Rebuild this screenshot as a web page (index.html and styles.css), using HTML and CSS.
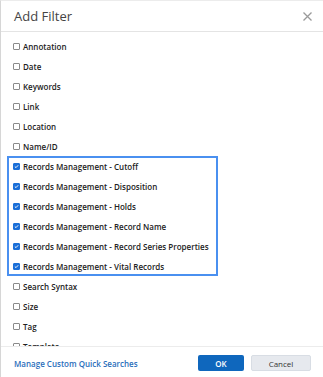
FILE: index.html
```html
<!DOCTYPE html>
<html lang="en">

<head>
  <meta charset="UTF-8">
  <meta name="viewport" content="width=device-width, initial-scale=1.0">
  <title>Add Filter</title>
  <link rel="stylesheet" href="styles.css">
</head>

<body>
  <div class="dialog">
    <header class="dialog_header">
      <h1>Add Filter</h1>
      <button class="dialog_close" aria-label="Close">
        <svg width="9" height="9" viewBox="0 0 9 9">
          <path d="M0.5 0.5 L8.5 8.5 M8.5 0.5 L0.5 8.5" stroke="#9a9a9a" stroke-width="1.3" fill="none" />
        </svg>
      </button>
    </header>

    <div class="dialog_body">
      <label class="filter"><input type="checkbox" /> Annotation</label>
      <label class="filter"><input type="checkbox" /> Date</label>
      <label class="filter"><input type="checkbox" /> Keywords</label>
      <label class="filter"><input type="checkbox" /> Link</label>
      <label class="filter"><input type="checkbox" /> Location</label>
      <label class="filter"><input type="checkbox" /> Name/ID</label>
      <div class="filter-group">
        <label class="filter"><input type="checkbox" checked /> Records Management - Cutoff</label>
        <label class="filter"><input type="checkbox" checked /> Records Management - Disposition</label>
        <label class="filter"><input type="checkbox" checked /> Records Management - Holds</label>
        <label class="filter"><input type="checkbox" checked /> Records Management - Record Name</label>
        <label class="filter"><input type="checkbox" checked /> Records Management - Record Series Properties</label>
        <label class="filter"><input type="checkbox" checked /> Records Management - Vital Records</label>
      </div>
      <label class="filter"><input type="checkbox" /> Search Syntax</label>
      <label class="filter"><input type="checkbox" /> Size</label>
      <label class="filter"><input type="checkbox" /> Tag</label>
      <label class="filter"><input type="checkbox" /> Template</label>
    </div>

    <footer class="dialog_footer">
      <a href="#" class="dialog_link">Manage Custom Quick Searches</a>
      <button class="btn btn-primary">OK</button>
      <button class="btn btn-secondary">Cancel</button>
    </footer>
  </div>
</body>

</html>
```

FILE: styles.css
```css
* {
  box-sizing: border-box;
  padding: 0;
  margin: 0;
}

html {
  font-family: 'Open Sans', sans-serif;
  color: #222222;
}

body {
  background-color: #ffffff;
  height: 377px;
  overflow: hidden;
}

.dialog {
  display: flex;
  flex-direction: column;
  height: 377px;
  border-left: 1px solid #d6d6d6;
  border-top: 1px solid #ececec;
}

.dialog_header {
  display: flex;
  align-items: center;
  justify-content: space-between;
  height: 31px;
  padding: 0 11px 0 13px;
  border-bottom: 1px solid #e4e4e4;
}

.dialog_header h1 {
  font-size: 13px;
  font-weight: 400;
  color: #444444;
}

.dialog_close {
  display: flex;
  border: none;
  background: none;
}

.dialog_body {
  height: 315px;
  overflow: hidden;
  padding: 4px 0 0 12px;
  border-bottom: 1px solid #ececec;
}

.filter {
  display: flex;
  align-items: center;
  gap: 3px;
  height: 20px;
  font-size: 8px;
  font-weight: 600;
  color: #222222;
  white-space: nowrap;
}

.filter input {
  appearance: none;
  flex-shrink: 0;
  width: 7px;
  height: 7px;
  border: 1px solid #8a8a8a;
  border-radius: 1px;
  background-color: #ffffff;
}

.filter input:checked {
  border-color: #1b6fd8;
  background-color: #1b6fd8;
  background-image: url("data:image/svg+xml,%3Csvg xmlns='http://www.w3.org/2000/svg' viewBox='0 0 7 7'%3E%3Cpath d='M1.2 3.6 L2.8 5.1 L5.8 1.8' stroke='white' stroke-width='1.3' fill='none'/%3E%3C/svg%3E");
  background-size: 100% 100%;
}

.filter-group {
  width: 211px;
  margin-left: -6px;
  padding-left: 6px;
  outline: 2px solid #4a90f0;
  outline-offset: -2px;
}

.dialog_footer {
  display: flex;
  align-items: center;
  gap: 7px;
  padding: 8px 12px 0 13px;
}

.dialog_link {
  flex: 1;
  font-size: 8px;
  font-weight: 600;
  color: #2a6ebb;
  text-decoration: none;
}

.btn {
  height: 16px;
  font-family: 'Open Sans', sans-serif;
  font-size: 8px;
  border-radius: 2px;
}

.btn-primary {
  width: 46px;
  border: none;
  background-color: #0f67bd;
  color: #ffffff;
  font-weight: 600;
}

.btn-secondary {
  width: 60px;
  border: 1px solid #d8dde4;
  background-color: #e6e9ee;
  color: #333333;
}
```
